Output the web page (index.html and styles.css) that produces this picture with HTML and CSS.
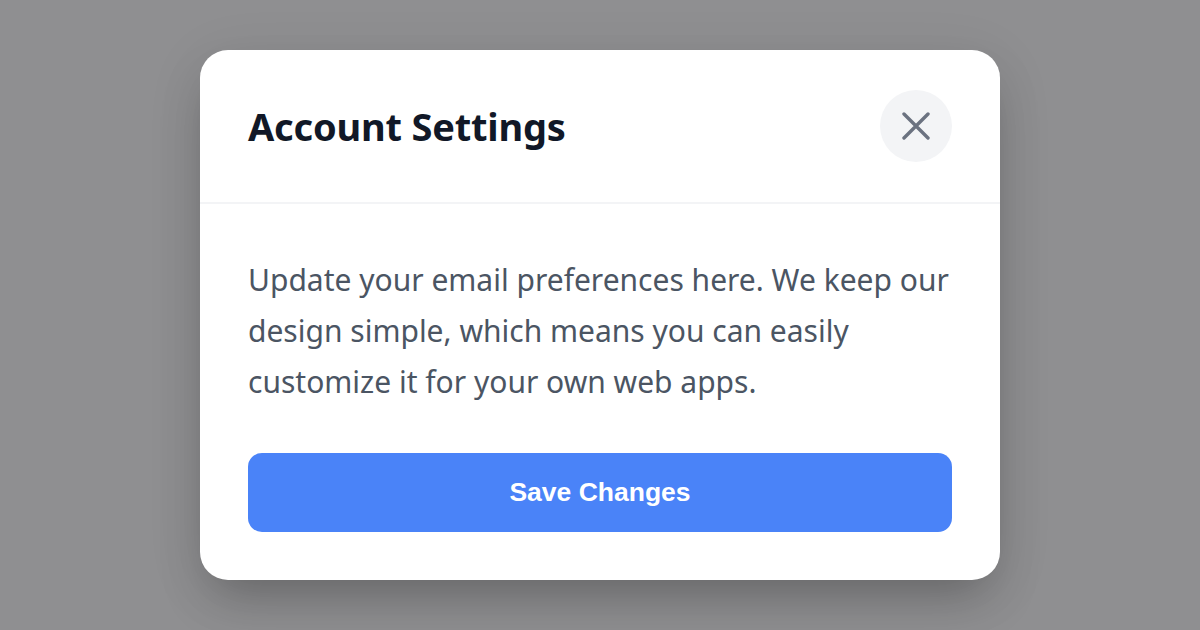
FILE: index.html
```html
<!DOCTYPE html>
<html lang="en">
<head>
<meta charset="utf-8">
<title>Account Settings</title>
<link rel="stylesheet" href="styles.css">
</head>
<body>
<div class="overlay">
  <div class="modal" role="dialog" aria-labelledby="modal-title">
    <div class="modal-header">
      <h2 id="modal-title" class="modal-title">Account Settings</h2>
      <button class="close-btn" aria-label="Close">
        <svg width="28" height="28" viewBox="0 0 28 28" fill="none" stroke="currentColor" stroke-width="3.4" stroke-linecap="round">
          <path d="M2 2 L26 26 M26 2 L2 26"/>
        </svg>
      </button>
    </div>
    <div class="modal-body">
      <p class="modal-text">Update your email preferences here. We keep our design simple, which means you can easily customize it for your own web apps.</p>
      <button class="save-btn">Save Changes</button>
    </div>
  </div>
</div>
</body>
</html>
```

FILE: styles.css
```css
* { box-sizing: border-box; }
html, body { margin: 0; padding: 0; }
body {
  width: 1200px;
  height: 630px;
  background: #8f8f91;
  font-family: "Segoe UI", "Noto Sans", sans-serif;
  overflow: hidden;
}
.overlay {
  height: 630px;
  display: flex;
  align-items: flex-start;
  justify-content: center;
  padding-top: 50px;
}
.modal {
  width: 800px;
  background: #ffffff;
  border-radius: 28px;
  box-shadow: 0 25px 50px -12px rgba(0, 0, 0, 0.25), 0 10px 60px rgba(0, 0, 0, 0.08);
}
.modal-header {
  display: flex;
  align-items: center;
  justify-content: space-between;
  padding: 40px 48px;
  border-bottom: 2px solid #f3f4f6;
}
.modal-title {
  margin: 0;
  font-size: 38px;
  line-height: 50px;
  font-weight: 700;
  color: #111827;
  letter-spacing: -0.2px;
}
.close-btn {
  width: 72px;
  height: 72px;
  border: none;
  border-radius: 50%;
  background: #f3f4f6;
  color: #6b7280;
  display: flex;
  align-items: center;
  justify-content: center;
  padding: 0;
  cursor: pointer;
}
.modal-body {
  padding: 50px 48px 48px;
}
.modal-text {
  margin: 0 0 46px;
  font-size: 30px;
  line-height: 51px;
  color: #4b5563;
}
.save-btn {
  display: block;
  width: 100%;
  height: 79px;
  border: none;
  border-radius: 14px;
  background: #4a83f8;
  color: #ffffff;
  font-family: "Liberation Sans", Arial, sans-serif;
  font-weight: 700;
  font-size: 26.5px;
  cursor: pointer;
}
```
